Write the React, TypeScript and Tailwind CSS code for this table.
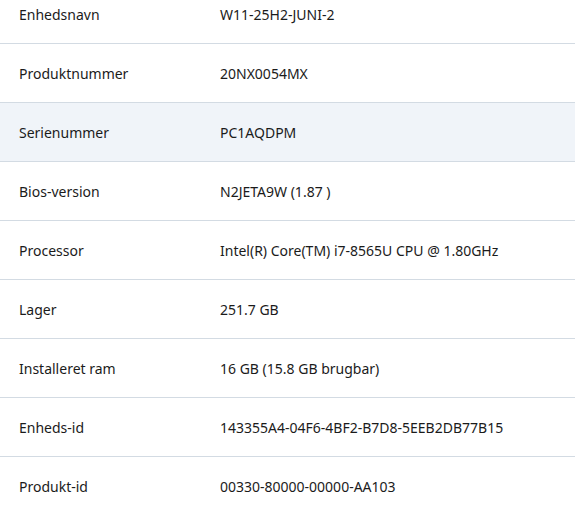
import React from "react";

const rows: [string, string][] = [
  ["Enhedsnavn", "W11-25H2-JUNI-2"],
  ["Produktnummer", "20NX0054MX"],
  ["Serienummer", "PC1AQDPM"],
  ["Bios-version", "N2JETA9W (1.87 )"],
  ["Processor", "Intel(R) Core(TM) i7-8565U CPU @ 1.80GHz"],
  ["Lager", "251.7 GB"],
  ["Installeret ram", "16 GB (15.8 GB brugbar)"],
  ["Enheds-id", "143355A4-04F6-4BF2-B7D8-5EEB2DB77B15"],
  ["Produkt-id", "00330-80000-00000-AA103"],
];

export default function App() {
  return (
    <div className="w-[575px] h-[513px] overflow-hidden bg-white text-[#1b1b1b] text-[14px]" style={{ fontFamily: '"Noto Sans", "Open Sans", sans-serif' }}>
      <div className="-mt-[15px] flex flex-col">
        {rows.map(([k, v], i) => (
          <div
            key={k}
            className={`flex items-center h-[59px] border-b border-[#d3dbe3] ${i === 2 ? "bg-[#f0f4f9]" : "bg-white"}`}
          >
            <div className="w-[220px] pl-[19px] shrink-0">{k}</div>
            <div>{v}</div>
          </div>
        ))}
      </div>
    </div>
  );
}
